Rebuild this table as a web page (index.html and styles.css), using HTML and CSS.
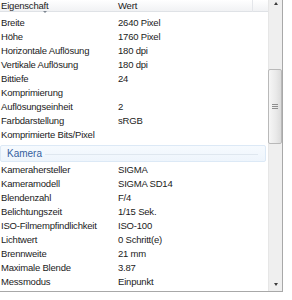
FILE: index.html
```html
<!DOCTYPE html>
<html lang="de">
	<head>
		<meta charset="utf-8">
		<title>Eigenschaften</title>
		<link rel="stylesheet" href="styles.css">
	</head>
	<body>
		<div id="pane">
			<div id="list">
				<div class="head">
					<span class="name">Eigenschaft</span>
					<span class="value">Wert</span>
					<span class="sort"></span>
				</div>
				<div class="row"><span class="name">Breite</span><span class="value">2640 Pixel</span></div>
				<div class="row"><span class="name">Höhe</span><span class="value">1760 Pixel</span></div>
				<div class="row"><span class="name">Horizontale Auflösung</span><span class="value">180 dpi</span></div>
				<div class="row"><span class="name">Vertikale Auflösung</span><span class="value">180 dpi</span></div>
				<div class="row"><span class="name">Bittiefe</span><span class="value">24</span></div>
				<div class="row"><span class="name">Komprimierung</span><span class="value"></span></div>
				<div class="row"><span class="name">Auflösungseinheit</span><span class="value">2</span></div>
				<div class="row"><span class="name">Farbdarstellung</span><span class="value">sRGB</span></div>
				<div class="row"><span class="name">Komprimierte Bits/Pixel</span><span class="value"></span></div>
				<div class="group"><span>Kamera</span><i></i></div>
				<div class="row"><span class="name">Kamerahersteller</span><span class="value">SIGMA</span></div>
				<div class="row"><span class="name">Kameramodell</span><span class="value">SIGMA SD14</span></div>
				<div class="row"><span class="name">Blendenzahl</span><span class="value">F/4</span></div>
				<div class="row"><span class="name">Belichtungszeit</span><span class="value">1/15 Sek.</span></div>
				<div class="row"><span class="name">ISO-Filmempfindlichkeit</span><span class="value">ISO-100</span></div>
				<div class="row"><span class="name">Lichtwert</span><span class="value">0 Schritt(e)</span></div>
				<div class="row"><span class="name">Brennweite</span><span class="value">21 mm</span></div>
				<div class="row"><span class="name">Maximale Blende</span><span class="value">3.87</span></div>
				<div class="row"><span class="name">Messmodus</span><span class="value">Einpunkt</span></div>
			</div>
			<div id="scroll">
				<div class="btn up"><span></span></div>
				<div class="track">
					<div class="thumb"><b></b><b></b><b></b></div>
				</div>
				<div class="btn down"><span></span></div>
			</div>
		</div>
	</body>
</html>
```

FILE: styles.css
```css
* {
	margin: 0px;
	padding: 0px;
	box-sizing: border-box;
}

body {
	width: 292px;
	height: 300px;
	background-color: #ffffff;
	font-family: "Liberation Sans", Arial, sans-serif;
	font-size: 9.5px;
	letter-spacing: -0.2px;
	color: #1b1b1b;
	overflow: hidden;
}

#pane {
	display: flex;
	width: 283px;
	height: 292px;
	border-right: 1px solid #a8a8a8;
	border-bottom: 1px solid #a8a8a8;
	overflow: hidden;
}

#list {
	flex: 1;
	overflow: hidden;
}

/* Spaltenkopf */
.head {
	position: relative;
	display: flex;
	align-items: center;
	height: 12px;
	margin-bottom: 4px;
	background: linear-gradient(#ffffff, #f1f2f4);
	border-bottom: 1px solid #dfe2e6;
	line-height: 10px;
}

.head .value {
	border-right: 1px solid #e4e6ea;
	height: 12px;
	width: 135px;
	display: flex;
	align-items: center;
}

.sort {
	position: absolute;
	left: 43px;
	top: 11px;
	width: 0;
	height: 0;
	border-left: 2px solid transparent;
	border-right: 2px solid transparent;
	border-top: 2px solid #7d8590;
}

.row {
	display: flex;
	align-items: center;
	height: 14px;
	line-height: 14px;
	white-space: nowrap;
}

.name {
	width: 118px;
	padding-left: 1px;
	flex-shrink: 0;
}

.value {
	flex-shrink: 0;
}

/* Gruppenkopf */
.group {
	display: flex;
	align-items: center;
	height: 17px;
	margin: 3px 2px 1px 0;
	padding: 0 7px 0 6px;
	background: linear-gradient(#f6fafe, #eef5fc);
	border: 1px solid #dce9f6;
	border-radius: 2px;
	color: #35609f;
	font-size: 10px;
	letter-spacing: 0;
}

.group i {
	flex: 1;
	height: 1px;
	margin-left: 3px;
	margin-top: 1px;
	background-color: #dfe7ef;
}

/* Bildlaufleiste */
#scroll {
	display: flex;
	flex-direction: column;
	width: 14px;
	background-color: #efefef;
	border-left: 1px solid #e6e6e6;
}

.btn {
	height: 16px;
	display: flex;
	align-items: center;
	justify-content: center;
}

.up {
	height: 8px;
	align-items: flex-start;
	padding-top: 2px;
}

.up span {
	border-left: 2.5px solid transparent;
	border-right: 2.5px solid transparent;
	border-bottom: 3px solid #3c3c3c;
}

.down span {
	border-left: 2.5px solid transparent;
	border-right: 2.5px solid transparent;
	border-top: 3px solid #3c3c3c;
	margin-top: 2px;
}

.track {
	flex: 1;
	padding-top: 61px;
}

.thumb {
	height: 75px;
	margin-left: -1px;
	border: 1px solid #b9b9b9;
	border-radius: 2px;
	background: linear-gradient(90deg, #f6f6f6, #e9e9e9 60%, #dcdcdc);
	display: flex;
	flex-direction: column;
	align-items: center;
	justify-content: center;
	gap: 1px;
}

.thumb b {
	display: block;
	width: 6px;
	height: 1px;
	background-color: #8e8e8e;
}
```
